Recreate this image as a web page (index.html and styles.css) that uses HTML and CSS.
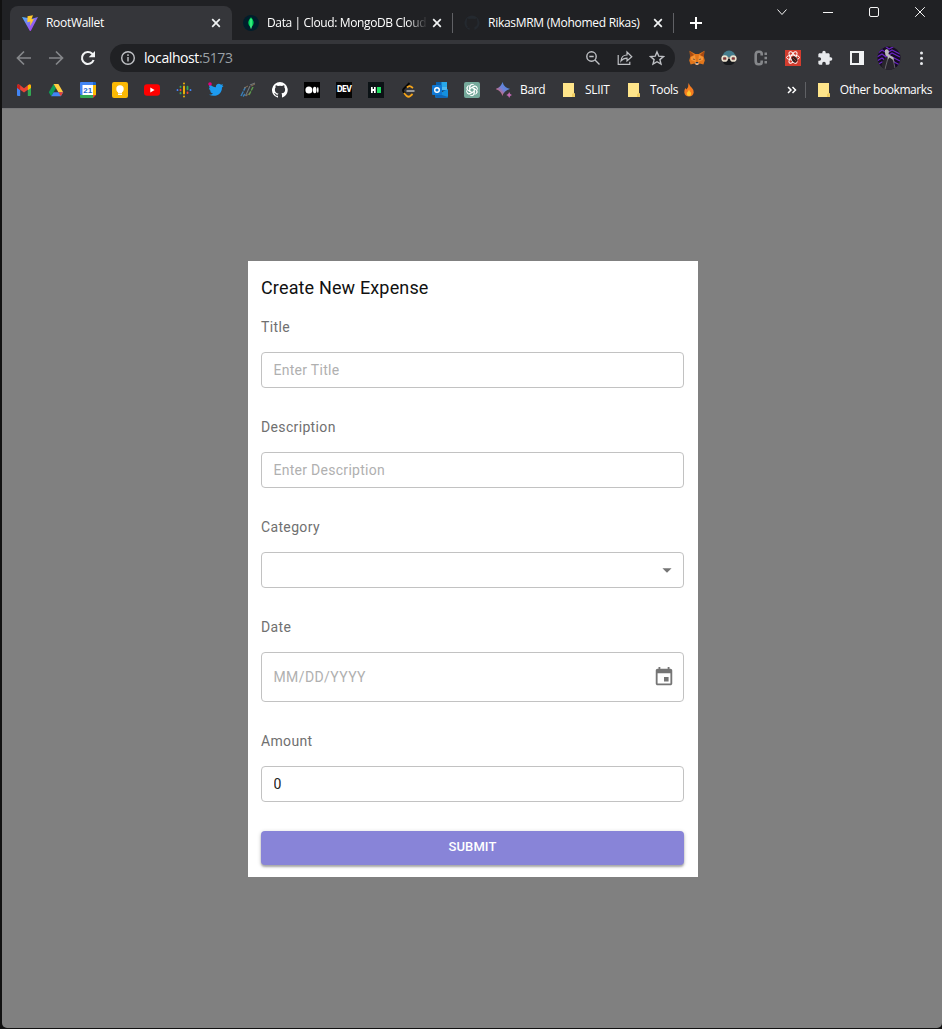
FILE: index.html
```html
<!DOCTYPE html>
<html lang="en">
<head>
<meta charset="utf-8">
<title>RootWallet</title>
<link rel="stylesheet" href="styles.css">
</head>
<body>
<div class="window">
  <header class="chrome">
    <div class="tabstrip">
      <div class="tab tab-active">
        <svg class="i16" viewBox="0 0 16 16"><defs><linearGradient id="v" x1="0" y1="0" x2="1" y2="1"><stop offset="0" stop-color="#4bb5fa"/><stop offset=".8" stop-color="#a943ef"/></linearGradient></defs><path fill="url(#v)" d="M0 2l6 1 3 1 7-2-7 13.500q-.7 1-1.400 0z"/><path fill="#ffc928" d="M5.500 1.300l5.500-1-1.500 4 2.400-.4-3.800 7 .3-4.300-3 .7z"/></svg>
        <span class="tab-title t-root">RootWallet</span>
        <svg class="close" viewBox="0 0 10 10"><path d="M1.200 1.200l7.600 7.600M8.800 1.200L1.200 8.800"/></svg>
      </div>
      <div class="tab tab-mongo">
        <svg class="i16" viewBox="0 0 16 16"><circle cx="8" cy="8" r="8" fill="#001e2b"/><path fill="#00d45c" d="M8 2.300c3 3 4 6.800 0 10.500-4-3.700-3-7.500 0-10.500z"/><path stroke="#65ff9a" stroke-width="1" d="M8 4v9.500"/></svg>
        <span class="tab-title t-mongo">Data | Cloud: MongoDB Cloud</span>
        <svg class="close" viewBox="0 0 10 10"><path d="M1.200 1.200l7.600 7.600M8.800 1.200L1.200 8.800"/></svg>
      </div>
      <div class="tab tab-github">
        <svg class="i16" viewBox="0 0 16 16"><path fill="#24292f" d="M8 .5a7.500 7.500 0 0 0-2.400 14.600v-2.300C3.500 13.200 3 11.900 3 11.900L4.200 12l1.400.5c-2.300-.5-3.300-2.200-2.900-4.800L3 5l.1-1.800 2 .8q2.900-.7 5.800 0l2-.8L13 5.200c1.300 4-.4 6.500-2.600 6.900v3A7.500 7.500 0 0 0 8 .5z"/></svg>
        <span class="tab-title t-github">RikasMRM (Mohomed Rikas)</span>
        <svg class="close" viewBox="0 0 10 10"><path d="M1.200 1.200l7.600 7.600M8.800 1.200L1.200 8.800"/></svg>
      </div>
      <svg class="plus" viewBox="0 0 12 12"><path d="M6 0v12M0 6h12"/></svg>
      <div class="controls">
        <svg viewBox="0 0 12 12"><path d="M1.500 3.500L6 8.500l4.500-5"/></svg>
        <svg viewBox="0 0 12 12"><path d="M1 6.500h10"/></svg>
        <svg viewBox="0 0 12 12"><rect x="1.500" y="1.500" width="9" height="9" rx="1.500"/></svg>
        <svg viewBox="0 0 12 12"><path d="M1.200 1.200l9.600 9.600M10.800 1.200l-9.600 9.600"/></svg>
      </div>
    </div>

    <div class="toolbar">
      <div class="nav">
        <svg class="i16 dim" viewBox="0 0 16 16"><path d="M15 8H2M8 1.500L1.500 8 8 14.500"/></svg>
        <svg class="i16 dim" viewBox="0 0 16 16"><path d="M1 8h13M8 1.500L14.500 8 8 14.500"/></svg>
        <svg class="i16 reload" viewBox="0 0 16 16"><path d="M13.600 10A6 6 0 1 1 12.200 3.700L14 5.500"/><path class="solid" d="M15 1v6.300H8.700z"/></svg>
      </div>
      <div class="omnibox">
        <svg class="i16 line" viewBox="0 0 16 16"><circle cx="8" cy="8" r="6.300"/><path d="M8 7v4.500M8 4.300V6"/></svg>
        <span class="url">localhost<span class="port">:5173</span></span>
        <div class="omni-actions">
          <svg class="i16 line" viewBox="0 0 16 16"><circle cx="6.500" cy="6.500" r="4.700"/><path d="M10 10l4.500 4.500M4.300 6.500h4.400"/></svg>
          <svg class="i16 line thin" viewBox="0 0 16 16"><path d="M1.200 5v9.300h11.600v-2.600M4 11c.3-4 2.500-6 6-6V2l4.800 4.800L10 11V8.200C7.500 8.200 5.500 9 4 11z"/></svg>
          <svg class="i16 line" viewBox="0 0 16 16"><path d="M8 1.900l1.800 4.300 4.600.4-3.500 3 1.100 4.500L8 11.700l-4 2.400 1.100-4.500-3.500-3 4.600-.4z"/></svg>
        </div>
      </div>
      <div class="extensions">
        <svg class="i16" viewBox="0 0 16 16"><path fill="#e2761b" d="M.5.800L6.300 4h3.400L15.500.800l-.7 6 1 3.700-1.400 4-3.700-1L9 15H7l-1.700-1.500-3.700 1-1.400-4 1-3.700z"/><path fill="#a84b13" d="M1 1l4 4-4 2zM15 1l-4 4 4 2z"/><path fill="#f59537" d="M2 7l4-2 1 7-5-2zM14 7l-4-2-1 7 5-2z"/><path fill="#dacabc" d="M6 12.500h4l-1 2.200H7z"/><path fill="#233447" d="M4.300 8.500l2 1-1.800.2zM11.700 8.500l-2 1 1.800.2zM6.700 12h2.600v1.300H6.700z"/></svg>
        <svg class="i16" viewBox="0 0 16 16"><path fill="#447b8b" d="M1.500 7a6.500 6.500 0 0 1 13 0z"/><path fill="#17191c" d="M2 9h12v3q-2 3-4 3H6q-3 0-4-3z"/><g fill="#8c9a96" stroke="#eee3ce" stroke-width="1.500"><circle cx="3.700" cy="8.500" r="2.600"/><circle cx="12.300" cy="8.500" r="2.600"/></g><path fill="#8b2f2f" d="M2.300 7.500h2.800v2H2.300zM10.900 7.500h2.800v2h-2.800z"/><path fill="#eee3ce" d="M6.500 7.500h3v1h-3z"/></svg>
        <svg class="i16" viewBox="0 0 16 16"><path fill="none" stroke="#85878a" stroke-width="2.600" d="M8.700 5.500V4Q8.700 1.800 6.500 1.800H5.200Q2.700 1.800 2.700 5v6q0 3.200 2.500 3.200h1.300q2.200 0 2.200-2.200v-1.500"/><path fill="#85878a" d="M11.500 2.500H14V5h-2.500zM11.500 6.700H14v2.500h-2.500zM11.500 11H14v2.500h-2.500z"/></svg>
        <svg class="i16" viewBox="0 0 16 16"><path fill="#d33c2e" d="M0 0h16v16H0z"/><g fill="none" stroke="#fff" stroke-width="1"><ellipse cx="8" cy="7.500" rx="6.500" ry="2.400"/><ellipse cx="8" cy="7.500" rx="6.500" ry="2.400" transform="rotate(60 8 7.500)"/><ellipse cx="8" cy="7.500" rx="6.500" ry="2.400" transform="rotate(120 8 7.500)"/></g><ellipse cx="9.500" cy="9.500" rx="2.500" ry="3.300" fill="#32211f" transform="rotate(-35 9.500 9.500)"/><path stroke="#d33c2e" stroke-width=".7" d="M8 8l3.500 3.500"/></svg>
        <svg class="i16" viewBox="0 0 24 24"><path fill="#e8eaed" d="M20.500 11H19V7c0-1.100-.9-2-2-2h-4V3.500a2.500 2.500 0 0 0-5 0V5H4c-1.100 0-2 .9-2 2v3.800h1.500a2.700 2.700 0 0 1 0 5.400H2V20c0 1.100.9 2 2 2h3.800v-1.500a2.700 2.700 0 0 1 5.400 0V22H17c1.100 0 2-.9 2-2v-4h1.500a2.500 2.500 0 0 0 0-5z"/></svg>
        <svg class="i16" viewBox="0 0 16 16"><path fill="#f1f3f4" fill-rule="evenodd" d="M1 1h14v14H1zM3 3v10h7V3z"/></svg>
        <svg class="avatar" viewBox="0 0 24 24"><defs><clipPath id="av"><circle cx="12" cy="12" r="11.500"/></clipPath></defs><g clip-path="url(#av)"><path fill="#160c22" d="M0 0h24v24H0z"/><path fill="none" stroke="#6924c2" stroke-width="1.300" d="M1 7l4-3 5 3 5-3 8 4M0 11l5-3 4 3 6-4 8 4M0 15l5-3 4 3 6-4 8 4M0 19l5-3 4 3 6-4 8 4M3 3l5-3 4 3 6-3 4 3"/><path fill="#28252c" d="M4 24q0-10 6-13l5 0 4 13z"/><path fill="#bdb9bc" d="M8 4l2-1 2 2-.5 3 2 1.500 3 2 1 5-2-3-3-2-1.500 2-.5-3-2-1-.5-3z"/><path stroke="#77747b" stroke-width=".8" d="M11 12l-3 11M16 13l2 9"/></g></svg>
        <svg class="i16" viewBox="0 0 16 16"><g fill="#e8eaed"><circle cx="8.500" cy="3" r="1.500"/><circle cx="8.500" cy="8.300" r="1.500"/><circle cx="8.500" cy="13.500" r="1.500"/></g></svg>
      </div>
    </div>

    <nav class="bookmarks">
      <svg class="i16" viewBox="0 0 16 16"><path fill="#4285f4" d="M1 4l3.200 2.500V14H2q-1 0-1-1z"/><path fill="#34a853" d="M11.800 6.500L15 4v9q0 1-1 1h-2.200z"/><path fill="#ea4335" d="M1 4q.5-2.500 2.500-1.200L8 6.200l4.500-3.400Q14.500 1.500 15 4l-.2 1.500L8 10.600 1.200 5.500z"/><path fill="#fbbc04" d="M11.800 3.400q3-2 3.200.6v2l-3.200 2.200z"/><path fill="#c5221f" d="M1 4q.2-2.600 3.200-.6v4.800L1 6z"/></svg>
      <svg class="i16" viewBox="0 0 16 16"><path fill="#0f9d58" d="M5.600 2L.8 10.300 3.200 14.300 8 6z"/><path fill="#ffcd40" d="M5.600 2h4.800l4.800 8.300h-4.800z"/><path fill="#4285f4" d="M3.200 14.300h9.600l2.400-4H5.600z"/><path fill="#ea4335" d="M10.400 10.300h4.800l-2.400 4z"/></svg>
      <svg class="i16" viewBox="0 0 16 16"><path fill="#4285f4" d="M0 1q0-1 1-1h12v3H3v13L0 12z"/><path fill="#1967d2" d="M13 0h2q1 0 1 1v2h-3z"/><path fill="#fbbc04" d="M13 3h3v10h-3z"/><path fill="#34a853" d="M0 13h13v3H1q-1 0-1-1z"/><path fill="#ea4335" d="M13 13h3l-3 3z"/><path fill="#fff" d="M2.500 3H13v10H2.500z"/><text x="7.800" y="11.300" text-anchor="middle" class="cal">21</text></svg>
      <svg class="i16" viewBox="0 0 16 16"><rect width="16" height="16" rx="2" fill="#fbb905"/><circle cx="8" cy="7" r="3.700" fill="#fff"/><path fill="#fff" d="M6 9h4v2.400H6zM6 12h4v1H6z"/></svg>
      <svg class="i16" viewBox="0 0 16 16"><rect y="2.300" width="16" height="11.500" rx="3" fill="red"/><path fill="#fff" d="M6.300 5.600l4.300 2.500-4.300 2.500z"/></svg>
      <svg class="i16" viewBox="0 0 16 16"><g fill="none" stroke-linecap="round" stroke-width="1.800"><path stroke="#4285f4" d="M1.500 8v.2M14.500 8v.2"/><path stroke="#34a853" d="M4.500 11v.4M11.500 4.700v2.600M4.500 4.700v.2"/><path stroke="#ea4335" d="M4.500 7.700v.6M11.500 10.500v.6"/><path stroke="#fbbc04" d="M8 4.500v7M8 1.500v.1M8 14.500v.1"/></g></svg>
      <svg class="i16" viewBox="0 0 16 16"><path fill="#1d9bf0" d="M15.500 4l-1.500 1.400c.1 6-5.500 10.500-13.200 7.300 1.700.1 3.100-.3 4.300-1.200-1.600-.2-2.500-1-3-2.200H3.400C1.900 8.600 1 7.400 1.100 5.800l1.300.4C1 5.100.7 3.500 1.600 1.900c1.700 2 3.800 3 6.300 3.300-.4-3 2.900-4.600 5.200-2.500l1.900-.7-.9 1.500z"/><circle cx="2" cy="2" r="1.800" fill="#e6007a"/></svg>
      <svg class="i16" viewBox="0 0 16 16"><g fill="none" stroke-width="1.500"><path stroke="#397db5" stroke-dasharray="5 1" d="M1 14L5.500 5M3 14.500l2-2.500"/><path stroke="#6f777c" stroke-width="1.100" d="M5.500 14L10 4M10 3l5-2"/><path stroke="#5c9a4c" stroke-dasharray="4 1" d="M9 13l4-8"/><path stroke="#9a7e5b" stroke-width=".8" d="M11 4l4-2M4 6l4-2M6 14l4-3"/></g></svg>
      <svg class="i16" viewBox="0 0 16 16"><path fill="#fff" d="M8 0a8 8 0 0 0-2.500 15.600c.4.100.5-.2.500-.4v-1.500c-2.200.5-2.700-1-2.700-1-.4-.9-.9-1.200-.9-1.200-.7-.5.100-.5.100-.5.800.1 1.200.8 1.200.8.700 1.300 1.900.9 2.300.7.100-.5.300-.9.500-1.100-1.800-.2-3.600-.9-3.600-4 0-.9.300-1.600.8-2.100-.1-.2-.4-1 .1-2.100 0 0 .7-.2 2.200.8a7.700 7.700 0 0 1 4 0c1.500-1 2.200-.8 2.200-.8.400 1.100.2 1.900.1 2.100.5.600.8 1.300.8 2.200 0 3.100-1.900 3.700-3.700 3.900.3.300.6.800.6 1.500v2.200c0 .2.100.5.500.4A8 8 0 0 0 8 0z"/></svg>
      <svg class="i16" viewBox="0 0 16 16"><path fill="#000" d="M0 0h16v16H0z"/><g fill="#fff"><circle cx="4.900" cy="8" r="3.500"/><ellipse cx="10.700" cy="8" rx="1.800" ry="3.200"/><ellipse cx="13.800" cy="8" rx=".8" ry="2.900"/></g></svg>
      <span class="dev">DEV</span>
      <svg class="i16" viewBox="0 0 16 16"><path fill="#0b1215" d="M0 0h16v16H0z"/><path fill="#fff" d="M3 5h1.700v2H6V5h1.700v6H6V9H4.700v2H3z"/><path fill="#1fdf61" d="M9 5h4v6H9z"/></svg>
      <svg class="i16" viewBox="0 0 16 16"><path fill="none" stroke="#080808" stroke-width="1.800" d="M9.500 1L4 6.500q-2 2 0 4l1.500 1.500"/><path fill="none" stroke="#f5a419" stroke-width="1.800" d="M13 6l-2.200-1.500Q9 3.500 7 5.500M4 11l2.700 3q1.800 1.400 3.600 0l2.300-2"/><path stroke="#b3b3b3" stroke-width="1.600" d="M6.500 9h8"/></svg>
      <svg class="i16" viewBox="0 0 16 16"><path fill="#0a62ad" d="M4 0h11v9H4z"/><path fill="#28a8ea" d="M9.500 0H15v5H9.500z"/><path fill="#50b9ef" d="M10 5h5v3h-5z"/><path fill="#1490df" d="M3 9l7 1 6-3v7q0 2-2 2H5q-2 0-2-2z"/><path fill="#1066b5" d="M4 11l12 4-1 1H5q-2 0-2-2z"/><rect y="3" width="10" height="10" rx="1" fill="#0f78d4"/><circle cx="5" cy="8" r="2.300" fill="none" stroke="#fff" stroke-width="1.400"/></svg>
      <svg class="i16" viewBox="0 0 16 16"><rect width="16" height="16" rx="2" fill="#75a99b"/><g fill="none" stroke="#fff" stroke-width=".9"><path id="k" d="M5.800 9.200V4.800a2.500 2.500 0 0 1 4.600-1.300M5.800 6.700L9.500 4.600a2.500 2.500 0 0 1 3.500 1"/><use href="#k" transform="rotate(60 8 8)"/><use href="#k" transform="rotate(120 8 8)"/><use href="#k" transform="rotate(180 8 8)"/><use href="#k" transform="rotate(240 8 8)"/><use href="#k" transform="rotate(300 8 8)"/></g></svg>
      <div class="bm bm-bard">
        <svg class="i16" viewBox="0 0 16 16"><defs><linearGradient id="b" x1="0" y1="1" x2="1" y2="0"><stop offset=".2" stop-color="#d96570"/><stop offset=".5" stop-color="#7182d8"/><stop offset=".9" stop-color="#3c8be0"/></linearGradient></defs><path fill="url(#b)" d="M6.500 0Q8 5.500 14 7 8 8.500 6.500 14 5 8.500 -.5 7 5 5.500 6.500 0z"/><path fill="#c36ab4" d="M13.200 10q.6 2.300 2.800 3-2.200.7-2.800 3-.6-2.300-2.900-3 2.300-.7 2.900-3z"/></svg>
        <span class="t-bard">Bard</span>
      </div>
      <div class="bm bm-sliit">
        <svg class="i16" viewBox="0 0 16 16"><path fill="#ffe58a" d="M2 1h11v10l1 1v3H2z"/><path fill="#f0cd62" d="M11 15v-3l2-1 1 1v3z"/></svg>
        <span class="t-sliit">SLIIT</span>
      </div>
      <div class="bm bm-tools">
        <svg class="i16" viewBox="0 0 16 16"><path fill="#ffe58a" d="M2 1h11v10l1 1v3H2z"/><path fill="#f0cd62" d="M11 15v-3l2-1 1 1v3z"/></svg>
        <span class="t-tools">Tools</span>
        <svg class="fire" viewBox="0 0 12 14"><path fill="#f57c20" d="M5.500 0Q7 3.500 9 5q2 2 1.700 4.500Q10 13.500 6 13.500T1.300 9.500Q1 7 2.500 5l1 1.500Q5.800 4 5.500 0z"/><path fill="#ffc52e" d="M6 6.500q.5 2 2 3.200Q8.500 13 6 13T3.800 9.700Q5.500 8.500 6 6.500z"/></svg>
      </div>
      <div class="bm-end">
        <svg class="chev" viewBox="0 0 10 10"><path d="M1 2l3 3-3 3M5.500 2l3 3-3 3"/></svg>
        <span class="sep"></span>
        <svg class="i16" viewBox="0 0 16 16"><path fill="#ffe58a" d="M2 1h11v10l1 1v3H2z"/><path fill="#f0cd62" d="M11 15v-3l2-1 1 1v3z"/></svg>
        <span class="t-other">Other bookmarks</span>
      </div>
    </nav>
  </header>

  <main class="page">
    <form class="modal">
      <h1 class="heading">Create New Expense</h1>
      <label class="label">Title</label>
      <input class="field" placeholder="Enter Title">
      <label class="label">Description</label>
      <input class="field" placeholder="Enter Description">
      <label class="label">Category</label>
      <div class="field select"><svg class="caret" viewBox="0 0 24 24"><path d="M7 10l5 5 5-5z"/></svg></div>
      <label class="label">Date</label>
      <div class="field date"><span>MM/DD/YYYY</span><svg class="calendar" viewBox="0 0 24 24"><path d="M17 12h-5v5h5v-5zM16 1v2H8V1H6v2H5c-1.110 0-1.990.9-1.990 2L3 19c0 1.100.89 2 2 2h14c1.100 0 2-.9 2-2V5c0-1.100-.9-2-2-2h-1V1h-2zm3 18H5V8h14v11z"/></svg></div>
      <label class="label">Amount</label>
      <input class="field" value="0">
      <button type="button" class="submit">SUBMIT</button>
    </form>
  </main>
</div>
</body>
</html>
```

FILE: styles.css
```css
* { box-sizing: border-box; }
body { margin: 0; background: #1a1a1b; overflow: hidden; }
svg { display: block; flex: none; }
.window { width: 942px; height: 1029px; padding: 0 0 1px 2px; display: flex; flex-direction: column; background: #111; }
.chrome { background: #35363a; height: 109px; border-bottom: 1px solid #77777a; font: 12px/16px "Open Sans", "Noto Sans", sans-serif; letter-spacing: -.35px; color: #fff; flex: none; }
.i16 { width: 16px; height: 16px; }

.tabstrip { height: 40px; background: #202124; display: flex; align-items: center; padding-left: 8px; }
.tab { display: flex; align-items: center; height: 34px; margin-top: 6px; padding: 0 11px 0 12px; }
.tab-active { width: 222px; background: #35363a; border-radius: 8px 8px 0 0; }
.tab-mongo { width: 221px; padding-left: 11px; background: linear-gradient(#606165, #606165) right center / 1px 20px no-repeat; }
.tab-github { width: 221px; padding-left: 11px; background: linear-gradient(#606165, #606165) right center / 1px 20px no-repeat; }
.tab-title { flex: 1; min-width: 0; margin: 0 10px 0 8px; white-space: nowrap; }
.t-root { letter-spacing: -.3px; }
.t-mongo { margin-right: 6px; letter-spacing: -.37px; -webkit-mask-image: linear-gradient(90deg, #000 88%, transparent 101%); mask-image: linear-gradient(90deg, #000 88%, transparent 101%); }
.t-github { letter-spacing: -.28px; }
.close { width: 10px; height: 10px; fill: none; stroke: #f1f3f4; stroke-width: 1.7; }
.plus { width: 12px; height: 12px; margin: 6px 0 0 16px; fill: none; stroke: #fff; stroke-width: 2; }
.controls { display: flex; gap: 34px; margin: -16px 16px 0 auto; }
.controls svg { width: 12px; height: 12px; fill: none; stroke: #f5f5f5; stroke-width: 1; }

.toolbar { display: flex; align-items: center; height: 36px; padding-left: 14px; }
.nav { display: flex; gap: 16px; }
.dim { fill: none; stroke: #85878a; stroke-width: 1.700; }
.reload { fill: none; stroke: #f1f3f4; stroke-width: 2.100; }
.solid { fill: #f1f3f4; stroke: none; }
.omnibox { display: flex; align-items: center; width: 565px; height: 28px; margin-left: 14px; padding: 0 10px; border-radius: 14px; background: #202124; }
.line { fill: none; stroke: #bfc1c5; stroke-width: 1.400; }
.thin { stroke-width: 1.200; }
.url { margin-left: 8px; font-size: 14px; letter-spacing: -.42px; }
.port { color: #9aa0a6; }
.omni-actions { display: flex; gap: 16px; margin-left: auto; }
.extensions { display: flex; align-items: center; gap: 16px; margin-left: 14px; }
.avatar { width: 24px; height: 24px; margin: 0 -4px; }

.bookmarks { display: flex; align-items: center; gap: 16px; height: 28px; padding-left: 14px; }
.bm, .bm-end { display: flex; align-items: center; gap: 8px; white-space: nowrap; }
.t-bard { width: 25px; }
.t-sliit { width: 25px; letter-spacing: -.3px; }
.t-tools { width: 28px; }
.fire { width: 12px; height: 14px; margin-left: -3px; }
.bm-end { margin-left: auto; padding-right: 10px; }
.t-other { letter-spacing: -.42px; }
.chev { width: 10px; height: 10px; fill: none; stroke: #fff; stroke-width: 1.500; }
.sep { width: 1px; height: 16px; margin-right: 2px; background: #606165; }
.cal { font: bold 8px "Liberation Sans", sans-serif; letter-spacing: 0; fill: #1967d2; }
.dev { width: 16px; height: 16px; background: #050505; text-align: center; font: bold 8px/16px "DejaVu Sans Condensed", "Liberation Sans", sans-serif; letter-spacing: -.7px; }

.page { flex: 1; display: flex; justify-content: center; align-items: flex-start; background: #808080; border-radius: 0 0 5px 5px; padding: 152px 0 0 2px; }
.modal { width: 450px; height: 616px; padding: 13px 14px 12px 13px; background: #fff; display: flex; flex-direction: column; font-family: Roboto, sans-serif; letter-spacing: .35px; }
.heading { margin: 0; font-size: 18px; line-height: 28px; font-weight: 400; letter-spacing: .15px; color: #111; }
.label { margin-top: 13px; height: 24px; font-size: 14px; line-height: 24px; color: #707070; }
.field { width: 100%; height: 36px; margin: 13px 0 14px; padding: 0 11.5px; border: 1px solid #c2c2c2; border-radius: 4px; background: #fff; font: 14px Roboto, sans-serif; letter-spacing: .28px; color: #222; flex: none; outline: 0; }
.field::placeholder { color: #b0b0b0; opacity: 1; }
.select { display: flex; justify-content: flex-end; align-items: center; padding: 0 5px 1px 0; }
.caret { width: 22px; height: 22px; fill: #757575; }
.date { display: flex; justify-content: space-between; align-items: center; height: 50px; padding-right: 9px; letter-spacing: .4px; color: #b0b0b0; }
.calendar { width: 22px; height: 22px; margin: -1px -1px 0 0; fill: #757575; }
.submit { height: 34px; margin-top: 15px; padding: 0 0 3px; border: 0; border-radius: 4px; background: #8884d8; color: #fff; font: 500 13px Roboto, sans-serif; letter-spacing: .1px; box-shadow: 0 2px 2px rgba(0,0,0,.25), 0 1px 4px rgba(0,0,0,.2); flex: none; }
```
